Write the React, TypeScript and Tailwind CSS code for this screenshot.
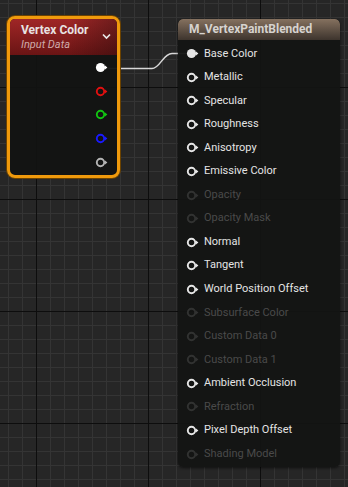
const font = { fontFamily: 'Roboto, "Liberation Sans", sans-serif' };

type PinProps = { color: string; filled?: boolean; dim?: boolean };

function Pin({ color, filled, dim }: PinProps) {
  return (
    <svg width="14" height="11" viewBox="0 0 14 11" className={dim ? 'opacity-25' : ''}>
      <circle cx="5.5" cy="5.5" r={filled ? 4.6 : 3.7} fill={filled ? color : 'none'} stroke={color} strokeWidth={filled ? 0 : 1.9} />
      <path d="M10 3.4 L12.4 5.5 L10 7.6 Z" fill={color} />
    </svg>
  );
}

const inputs: { label: string; on?: boolean; linked?: boolean }[] = [
  { label: 'Base Color', on: true, linked: true },
  { label: 'Metallic', on: true },
  { label: 'Specular', on: true },
  { label: 'Roughness', on: true },
  { label: 'Anisotropy', on: true },
  { label: 'Emissive Color', on: true },
  { label: 'Opacity' },
  { label: 'Opacity Mask' },
  { label: 'Normal', on: true },
  { label: 'Tangent', on: true },
  { label: 'World Position Offset', on: true },
  { label: 'Subsurface Color' },
  { label: 'Custom Data 0' },
  { label: 'Custom Data 1' },
  { label: 'Ambient Occlusion', on: true },
  { label: 'Refraction' },
  { label: 'Pixel Depth Offset', on: true },
  { label: 'Shading Model' },
];

const outputs = [
  { color: '#ffffff', filled: true },
  { color: '#e01010' },
  { color: '#12c412' },
  { color: '#1a1aff' },
  { color: '#b4b4b4' },
];

export default function App() {
  return (
    <div
      className="relative w-[348px] h-[487px] overflow-hidden bg-[#262626] bg-[image:linear-gradient(to_right,#0d0d0d_1px,transparent_1px),linear-gradient(to_bottom,#0d0d0d_1px,transparent_1px),linear-gradient(to_right,#343434_1px,transparent_1px),linear-gradient(to_bottom,#343434_1px,transparent_1px)] bg-[size:112px_112px,112px_112px,14px_14px,14px_14px] bg-[position:36px_87px,36px_87px,8px_3px,8px_3px]"
      style={font}
    >
      {/* wire */}
      <svg className="absolute left-0 top-0" width="348" height="487">
        <path d="M104 68.5 H152 C160 68.5 163 53.5 172 53.5 H190" fill="none" stroke="#d8d8d8" strokeWidth="1.5" />
      </svg>

      {/* Vertex Color node */}
      <div className="absolute left-[7px] top-[16px] w-[113px] h-[162px] rounded-[8px] border-[3px] border-[#f09a0c] bg-[#121312]/95 overflow-hidden shadow-[0_0_0_1px_#6b4200]">
        <div className="relative h-[36px] bg-[linear-gradient(to_bottom,#a02626,#6a1414)] px-[11px] pt-[3px]">
          <div className="absolute inset-0 bg-[linear-gradient(to_right,transparent_55%,rgba(20,10,10,0.35))]" />
          <div className="relative text-[12px] font-bold leading-[16px] text-[#e8e2e2]">Vertex Color</div>
          <div className="relative text-[11px] italic leading-[14px] text-[#cfaaaa]">Input Data</div>
          <svg className="absolute right-[6px] top-[14px]" width="9" height="7" viewBox="0 0 9 7">
            <path d="M1 1.5 L4.5 5 L8 1.5" fill="none" stroke="#e8e8e8" strokeWidth="1.7" />
          </svg>
        </div>
        <div className="flex flex-col items-end pr-[8px] pt-[1px]">
          {outputs.map((o, i) => (
            <div key={i} className="h-[23.6px] shrink-0 flex items-center">
              <Pin color={o.color} filled={o.filled} />
            </div>
          ))}
        </div>
      </div>

      {/* Material node */}
      <div className="absolute left-[178px] top-[19px] w-[162px] h-[448px] rounded-[5px] bg-[#131413]/95 overflow-hidden shadow-[0_1px_3px_rgba(0,0,0,0.6)]">
        <div className="h-[21px] rounded-t-[5px] bg-[linear-gradient(to_bottom,#85715f,#3d342d)] px-[11px] text-[12px] font-bold leading-[21px] text-[#d6d3cf]">
          M_VertexPaintBlended
        </div>
        <div className="flex flex-col pt-[2px] pl-[8px]">
          {inputs.map((r) => (
            <div key={r.label} className="h-[23.55px] shrink-0 flex items-center gap-[4px]">
              <Pin color={r.on ? '#e6e6e6' : '#8a8a8a'} filled={r.linked} dim={!r.on} />
              <span className={`text-[11px] ${r.on ? 'text-[#e4e4e4]' : 'text-[#4a4a4a]'}`}>{r.label}</span>
            </div>
          ))}
        </div>
      </div>
    </div>
  );
}
